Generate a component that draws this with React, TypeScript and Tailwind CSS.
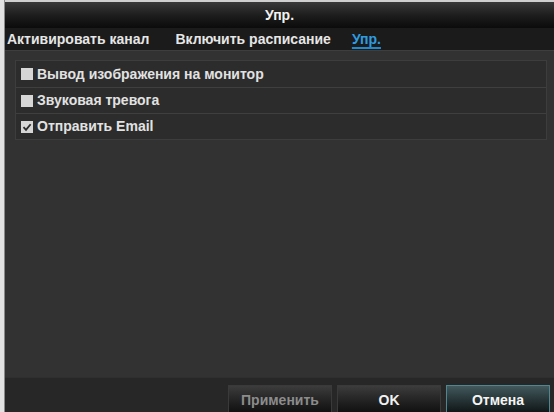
import React from "react";

const font = { fontFamily: '"Liberation Sans", Arial, sans-serif' };

function Check({ checked }: { checked?: boolean }) {
  return (
    <div className="w-[12px] h-[12px] bg-[#d6d6d6] flex items-center justify-center shrink-0">
      {checked && (
        <svg width="10" height="10" viewBox="0 0 10 10">
          <path d="M1.5 5.2 L4 7.8 L8.6 2.2" fill="none" stroke="#2a2a2a" strokeWidth="1.8" />
        </svg>
      )}
    </div>
  );
}

export default function App() {
  const rows = [
    { label: "Вывод изображения на монитор", checked: false },
    { label: "Звуковая тревога", checked: false },
    { label: "Отправить Email", checked: true },
  ];
  return (
    <div className="w-[554px] h-[412px] flex overflow-hidden bg-[#2b2b2b]" style={font}>
      <div className="w-[5px] h-full flex shrink-0">
        <div className="w-[4px] bg-[#e2e2e2]" />
        <div className="w-[1px] bg-[#8a8a8a]" />
      </div>
      <div className="flex-1 flex flex-col min-w-0">
        <div className="h-[2px] bg-[#d0d0d0]" />
        <div className="h-[26px] flex items-center justify-center bg-gradient-to-b from-[#3a3a3a] via-[#1e1e1e] to-[#0b0b0b] text-[14px] font-bold text-[#f2f2f2]">
          Упр.
        </div>
        <div className="h-[22px] bg-[#1b1b1b] flex items-center pl-[2px] text-[14px] font-bold text-[#e6e6e6] whitespace-nowrap">
          <span>Активировать канал</span>
          <span className="ml-[26px]">Включить расписание</span>
          <span className="ml-[21px] text-[#2f9be0] underline underline-offset-[3px] decoration-[#1f8ad0] decoration-[1.5px]">Упр.</span>
        </div>
        <div className="flex-1 bg-[#323232] border-t border-[#3e3e3e] pt-[9px] pl-[10px] pr-[7px]">
          <div className="border border-[#3d3d3d] flex flex-col">
            {rows.map((r, i) => (
              <div
                key={i}
                className={`h-[26px] flex items-center gap-[4px] pl-[5px] bg-[#2c2c2c] text-[14px] font-bold text-[#e2e2e2] ${i > 0 ? "border-t border-[#3f3f3f]" : ""}`}
              >
                <Check checked={r.checked} />
                <span>{r.label}</span>
              </div>
            ))}
          </div>
        </div>
        <div className="h-[35px] bg-[#272727] border-t border-[#2f2f2f] flex justify-end items-start pt-[7px] pr-[4px] gap-[5px] shrink-0">
          <div className="w-[104px] h-[30px] flex items-center justify-center border border-[#3a3a3a] bg-gradient-to-b from-[#3c3c3c] to-[#0e0e0e] text-[14px] font-bold text-[#8c8c8c]">
            Применить
          </div>
          <div className="w-[104px] h-[30px] flex items-center justify-center border border-[#3a3a3a] bg-gradient-to-b from-[#3c3c3c] to-[#0e0e0e] text-[14px] font-bold text-[#f0f0f0]">
            OK
          </div>
          <div className="w-[104px] h-[30px] flex items-center justify-center border border-[#4f8690] bg-gradient-to-b from-[#42595d] to-[#0e1314] text-[14px] font-bold text-[#f4f4f4]">
            Отмена
          </div>
        </div>
      </div>
    </div>
  );
}
